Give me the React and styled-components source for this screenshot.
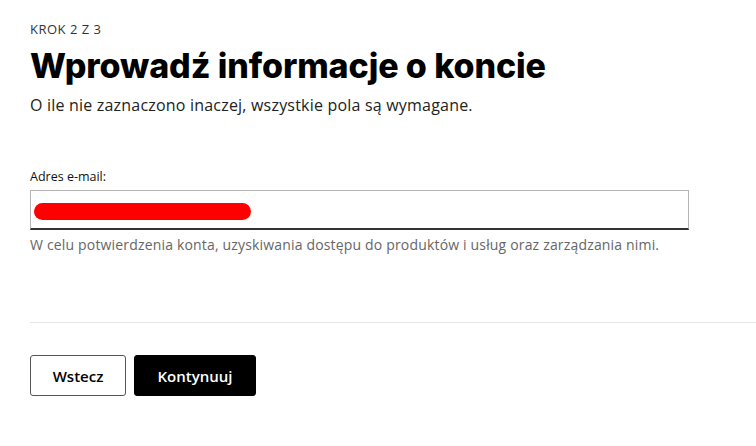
import React from "react";
import styled, { createGlobalStyle } from "styled-components";

const GlobalStyle = createGlobalStyle`
    html, body {
        margin: 0;
        padding: 0;
        background: #ffffff;
        font-family: "Open Sans", "Noto Sans", sans-serif;
    }
`;

const Page = styled.div`
    width: 756px;
    height: 446px;
    overflow: hidden;
    padding-top: 20px;
    box-sizing: border-box;
`;

const Header = styled.div`
    padding-left: 30px;
`;

const Step = styled.div`
    font-size: 13px;
    color: #333333;
    line-height: 18px;
    letter-spacing: 0.5px;
`;

const Title = styled.h1`
    margin: 8px 0 0 0;
    font-family: "Inter", sans-serif;
    font-weight: 800;
    font-size: 34px;
    line-height: 40px;
    color: #000000;
    letter-spacing: -0.1px;
`;

const Subtitle = styled.p`
    margin: 9px 0 0 0;
    font-size: 16px;
    line-height: 20px;
    color: #222222;
    letter-spacing: 0.2px;
`;

const Field = styled.div`
    padding-left: 30px;
    margin-top: 54px;
    width: 659px;
`;

const Label = styled.label`
    display: block;
    font-size: 12.5px;
    line-height: 16px;
    color: #111111;
    margin-bottom: 5px;
`;

const InputBox = styled.div`
    height: 40px;
    box-sizing: border-box;
    border: 1px solid #b5b5b5;
    border-bottom: 2px solid #333333;
    display: flex;
    align-items: center;
    padding-left: 3px;
`;

const Redacted = styled.div`
    width: 217px;
    height: 17px;
    border-radius: 9px;
    background: #ff0000;
    margin-top: 4px;
`;

const Help = styled.div`
    margin-top: 6px;
    font-size: 14px;
    line-height: 17px;
    color: #666666;
    letter-spacing: 0.17px;
    white-space: nowrap;
`;

const Divider = styled.hr`
    margin: 69px 0 0 30px;
    border: none;
    border-top: 1px solid #e6e6e6;
`;

const Actions = styled.div`
    display: flex;
    gap: 8px;
    padding-left: 30px;
    margin-top: 32px;
`;

const Button = styled.button`
    height: 41px;
    width: ${(p) => p.$width}px;
    padding: 0;
    box-sizing: border-box;
    border-radius: 3px;
    border: 1px solid ${(p) => (p.$primary ? "#000000" : "#555555")};
    background: ${(p) => (p.$primary ? "#000000" : "#ffffff")};
    color: ${(p) => (p.$primary ? "#ffffff" : "#000000")};
    font-family: "Open Sans", sans-serif;
    font-weight: 600;
    font-size: 15px;
    cursor: pointer;
`;

export default function App() {
    return (
        <Page>
            <GlobalStyle />
            <Header>
                <Step>KROK 2 Z 3</Step>
                <Title>Wprowadź informacje o koncie</Title>
                <Subtitle>O ile nie zaznaczono inaczej, wszystkie pola są wymagane.</Subtitle>
            </Header>
            <Field>
                <Label>Adres e-mail:</Label>
                <InputBox>
                    <Redacted />
                </InputBox>
                <Help>
                    W celu potwierdzenia konta, uzyskiwania dostępu do produktów i usług oraz zarządzania nimi.
                </Help>
            </Field>
            <Divider />
            <Actions>
                <Button $width={96}>Wstecz</Button>
                <Button $primary $width={122}>Kontynuuj</Button>
            </Actions>
        </Page>
    );
}
